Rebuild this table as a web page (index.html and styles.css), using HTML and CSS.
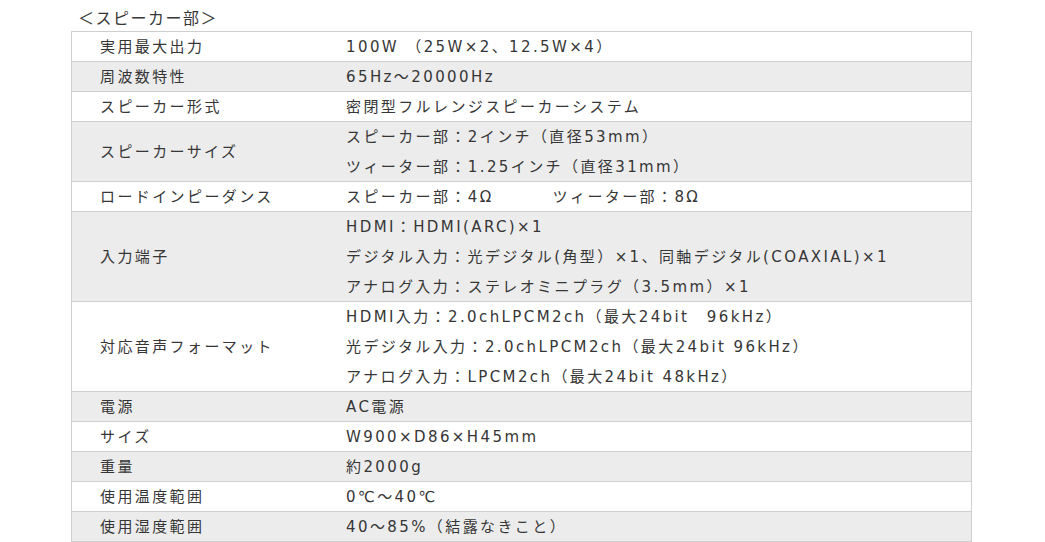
FILE: index.html
```html
<!DOCTYPE html>
<html lang="ja">
<head>
<meta charset="utf-8">
<link rel="stylesheet" href="styles.css">
</head>
<body>
<div class="wrap">
  <p class="title">＜スピーカー部＞</p>
  <table class="spec">
    <tr><th><div class="c">実用最大出力</div></th><td><div class="c">100W （25W×2、12.5W×4）</div></td></tr>
    <tr class="alt"><th><div class="c">周波数特性</div></th><td><div class="c">65Hz～20000Hz</div></td></tr>
    <tr><th><div class="c">スピーカー形式</div></th><td><div class="c">密閉型フルレンジスピーカーシステム</div></td></tr>
    <tr class="alt"><th><div class="c">スピーカーサイズ</div></th><td><div class="c">スピーカー部：2インチ（直径53mm）<br>ツィーター部：1.25インチ（直径31mm）</div></td></tr>
    <tr><th><div class="c">ロードインピーダンス</div></th><td><div class="c">スピーカー部：4Ω<span class="gap"></span>ツィーター部：8Ω</div></td></tr>
    <tr class="alt"><th><div class="c">入力端子</div></th><td><div class="c">HDMI：HDMI(ARC)×1<br>デジタル入力：光デジタル(角型）×1、同軸デジタル(COAXIAL)×1<br>アナログ入力：ステレオミニプラグ（3.5mm）×1</div></td></tr>
    <tr><th><div class="c">対応音声フォーマット</div></th><td><div class="c">HDMI入力：2.0chLPCM2ch（最大24bit　96kHz）<br>光デジタル入力：2.0chLPCM2ch（最大24bit 96kHz）<br>アナログ入力：LPCM2ch（最大24bit 48kHz）</div></td></tr>
    <tr class="alt"><th><div class="c">電源</div></th><td><div class="c">AC電源</div></td></tr>
    <tr><th><div class="c">サイズ</div></th><td><div class="c">W900×D86×H45mm</div></td></tr>
    <tr class="alt"><th><div class="c">重量</div></th><td><div class="c">約2000g</div></td></tr>
    <tr><th><div class="c">使用温度範囲</div></th><td><div class="c">0℃～40℃</div></td></tr>
    <tr class="alt"><th><div class="c">使用湿度範囲</div></th><td><div class="c">40～85%（結露なきこと）</div></td></tr>
  </table>
</div>
</body>
</html>
```
FILE: styles.css
```css
html, body {
  margin: 0;
  padding: 0;
  background: #fff;
}
body {
  font-family: "DejaVu Sans", "Noto Sans CJK JP", sans-serif;
  color: #363636;
  font-size: 15px;
  letter-spacing: 2.4px;
}
.wrap {
  padding-left: 71px;
}
.title {
  margin: 0 0 2px 7px;
  padding-top: 5px;
  line-height: 24px;
  font-size: 16px;
  letter-spacing: 1.5px;
  font-family: "Noto Sans CJK JP", sans-serif;
}
.spec {
  border-collapse: collapse;
  width: 901px;
  border: 1px solid #cfcfcf;
}
.spec tr {
  border-bottom: 1px solid #cfcfcf;
}
.spec tr.alt {
  background: #ececec;
}
.spec th,
.spec td {
  font-weight: normal;
  text-align: left;
  vertical-align: middle;
  padding: 0;
}
.c {
  line-height: 30px;
  margin-bottom: -1px;
}
.spec th {
  width: 246px;
  padding-left: 28px;
}
.gap {
  display: inline-block;
  width: 59px;
}
```
